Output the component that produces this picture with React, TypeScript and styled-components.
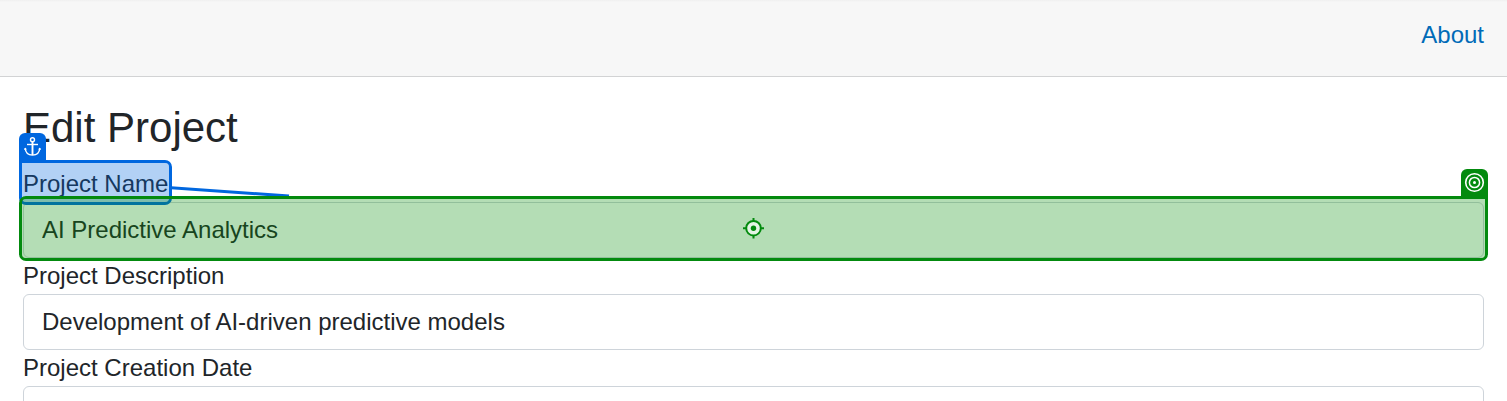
import React from "react";
import styled, { createGlobalStyle } from "styled-components";

const BLUE = "#0067df";
const GREEN = "#038a0e";

const GlobalStyle = createGlobalStyle`
  *, *::before, *::after { box-sizing: border-box; }
  body {
    margin: 0;
    background: #fff;
    color: #212529;
    font: 400 24px/36px "Liberation Sans", Arial, sans-serif;
    overflow: hidden;
  }
`;

const Page = styled.div`
  position: relative;
  height: 401px;
  overflow: hidden;
`;

const Header = styled.header`
  display: flex;
  justify-content: flex-end;
  height: 77px;
  padding: 17px 23px 0;
  background: linear-gradient(#f0f0f0, #f7f7f7 2px);
  border-bottom: 1px solid #d2d3d4;
`;

const NavLink = styled.a`
  color: #006bb7;
  text-decoration: none;
`;

const Form = styled.main`
  display: flex;
  flex-direction: column;
  padding: 25px 23px 0;
`;

const Title = styled.h1`
  margin: 0 0 12px;
  font-size: 42px;
  font-weight: 400;
  line-height: 52px;
`;

const Label = styled.label`
  height: 36px;
`;

const Input = styled.input`
  width: 100%;
  height: 56px;
  padding: 0 18px;
  border: 1px solid #ced4da;
  border-radius: 6px;
  background: #fff;
  color: inherit;
  font: inherit;
  outline: none;
`;

const Highlight = styled.div<{
  $color: string;
  $fill: string;
  $x: number;
  $y: number;
  $w: number;
  $h: number;
  $tab: "left" | "right";
}>`
  position: absolute;
  left: ${(p) => p.$x}px;
  top: ${(p) => p.$y}px;
  width: ${(p) => p.$w}px;
  height: ${(p) => p.$h}px;
  display: flex;
  align-items: flex-start;
  justify-content: center;
  border: 3px solid ${(p) => p.$color};
  border-radius: ${(p) => (p.$tab === "left" ? "0 7px 7px 7px" : "7px 0 7px 7px")};
  background: ${(p) => p.$fill};
  background-clip: padding-box;
  pointer-events: none;
`;

const Tab = styled.div<{ $color: string; $side: "left" | "right" }>`
  position: absolute;
  top: -30px;
  ${(p) => p.$side}: -3px;
  width: 27px;
  height: 28px;
  border-radius: 6px 6px 0 0;
  background: ${(p) => p.$color};

  svg { display: block; }
`;

const Center = styled.div`
  display: flex;
  padding-top: 19px;
`;

const Connector = styled.svg`
  position: absolute;
  left: 171px;
  top: 184px;
`;

const AnchorIcon = () => (
  <svg width="27" height="27" viewBox="0 0 27 27" fill="none" stroke="#fff" strokeWidth="1.4">
    <circle cx="13.5" cy="6.8" r="2" />
    <path d="M13.5 8.8V22" strokeWidth="1.9" />
    <path d="M8 11.5h11" />
    <path d="M6.2 15c.3 4.5 3.2 7.1 7.3 7.1s7-2.6 7.3-7.1" />
    <path d="M5.3 17l.9-2 1.5 1.3M21.7 17l-.9-2-1.5 1.3" strokeWidth=".7" />
  </svg>
);

const TargetIcon = () => (
  <svg width="27" height="27" viewBox="0 0 27 27" fill="none" stroke="#fff">
    <circle cx="13.5" cy="13.5" r="8.8" strokeWidth="1.6" />
    <circle cx="13.5" cy="13.5" r="5.1" strokeWidth="1.5" />
    <circle cx="13.5" cy="13.5" r="1.5" fill="#fff" stroke="none" />
  </svg>
);

const CrosshairIcon = () => (
  <svg width="21" height="21" viewBox="0 0 21 21" fill="none" stroke={GREEN} strokeWidth="2">
    <circle cx="10.5" cy="10.2" r="7.3" fill="#e5f4e5" />
    <circle cx="10.5" cy="10.2" r="2.7" fill={GREEN} stroke="none" />
    <path d="M10.5 0v3M10.5 17.200v3.200M0 10.200h3.200M17.800 10.200H21" />
  </svg>
);

export default function App() {
  return (
    <Page>
      <GlobalStyle />
      <Header>
        <NavLink href="#about">About</NavLink>
      </Header>
      <Form>
        <Title>Edit Project</Title>
        <Label htmlFor="name">Project Name</Label>
        <Input id="name" defaultValue="AI Predictive Analytics" />
        <Label htmlFor="description">Project Description</Label>
        <Input id="description" defaultValue="Development of AI-driven predictive models" />
        <Label htmlFor="created">Project Creation Date</Label>
        <Input id="created" />
      </Form>
      <Highlight $color={BLUE} $fill="rgba(0, 103, 223, 0.3)" $x={19} $y={160} $w={153} $h={45} $tab="left">
        <Tab $color={BLUE} $side="left">
          <AnchorIcon />
        </Tab>
      </Highlight>
      <Connector width="119" height="12" viewBox="0 0 119 12">
        <path d="M0 3.8L118 12" stroke={BLUE} strokeWidth="3" />
      </Connector>
      <Highlight $color={GREEN} $fill="rgba(8, 144, 10, 0.3)" $x={19} $y={196} $w={1469} $h={65} $tab="right">
        <Tab $color={GREEN} $side="right">
          <TargetIcon />
        </Tab>
        <Center>
          <CrosshairIcon />
        </Center>
      </Highlight>
    </Page>
  );
}
